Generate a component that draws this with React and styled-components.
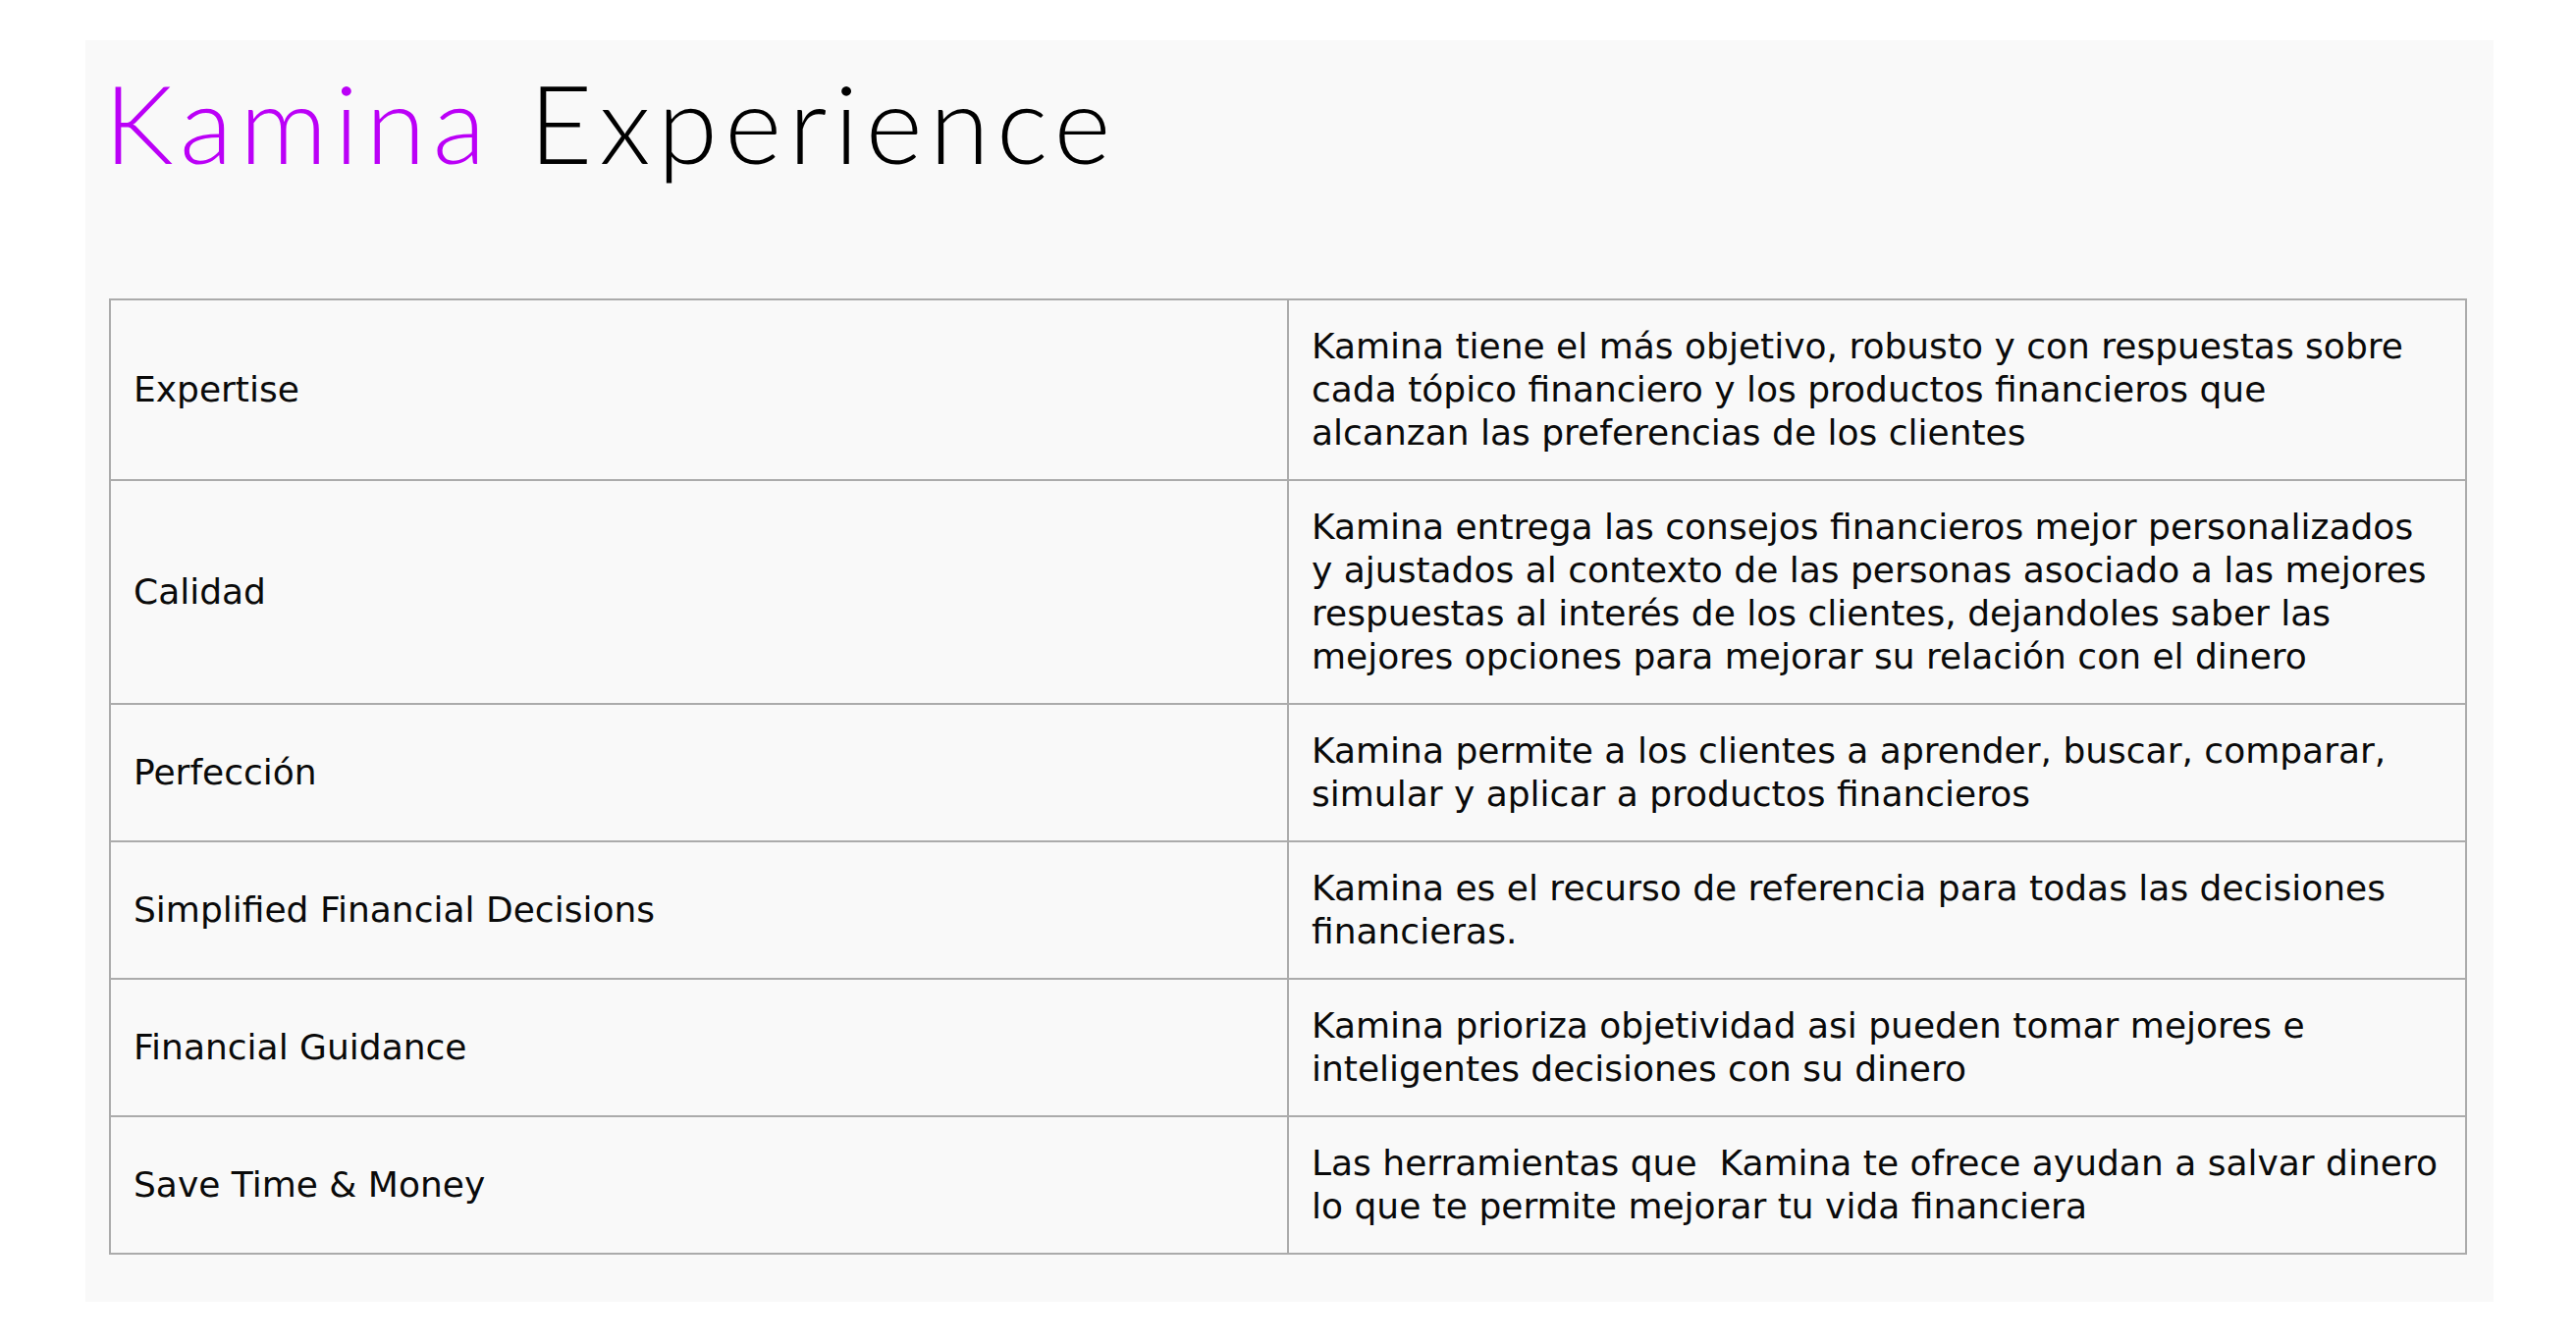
import React from "react";
import styled, { createGlobalStyle } from "styled-components";

const Global = createGlobalStyle`
  html, body { margin: 0; padding: 0; background: #ffffff; }
  body { font-family: "DejaVu Sans", "Liberation Sans", sans-serif; }
`;

const Page = styled.div`
  padding: 41px 84px 40px 87px;
`;

const Panel = styled.section`
  width: 2453px;
  background: #f9f9f9;
  padding: 0 25px 48px 24px;
  box-sizing: border-box;
`;

const Title = styled.h1`
  margin: 0 0 0 -5px;
  padding: 18px 0 0 0;
  height: 263px;
  box-sizing: border-box;
  font-family: "Lato", sans-serif;
  font-weight: 300;
  font-size: 111px;
  line-height: 130px;
  color: #000;
  letter-spacing: 7.2px;
`;

const Accent = styled.span`
  color: #bb00f7;
`;

const Table = styled.table`
  width: 2402px;
  border-collapse: collapse;
  table-layout: fixed;
  border: 2px solid #ababab;
`;

const Cell = styled.td`
  border: 2px solid #ababab;
  padding: 25px 25px 25px 23px;
  vertical-align: middle;
  font-family: "DejaVu Sans", sans-serif;
  font-size: 36px;
  line-height: 44px;
  color: #0a0a0a;
  white-space: nowrap;
  width: 50%;
`;

const Line = styled.span`
  display: block;
`;

const rows = [
  {
    label: "Expertise",
    lines: [
      "Kamina tiene el más objetivo, robusto y con respuestas sobre",
      "cada tópico financiero y los productos financieros que",
      "alcanzan las preferencias de los clientes",
    ],
  },
  {
    label: "Calidad",
    lines: [
      "Kamina entrega las consejos financieros mejor personalizados",
      "y ajustados al contexto de las personas asociado a las mejores",
      "respuestas al interés de los clientes, dejandoles saber las",
      "mejores opciones para mejorar su relación con el dinero",
    ],
  },
  {
    label: "Perfección",
    lines: [
      "Kamina permite a los clientes a aprender, buscar, comparar,",
      "simular y aplicar a productos financieros",
    ],
  },
  {
    label: "Simplified Financial Decisions",
    lines: [
      "Kamina es el recurso de referencia para todas las decisiones",
      "financieras.",
    ],
  },
  {
    label: "Financial Guidance",
    lines: [
      "Kamina prioriza objetividad asi pueden tomar mejores e",
      "inteligentes decisiones con su dinero",
    ],
  },
  {
    label: "Save Time & Money",
    lines: [
      "Las herramientas que\u00a0 Kamina te ofrece ayudan a salvar dinero",
      "lo que te permite mejorar tu vida financiera",
    ],
  },
];

export default function App() {
  return (
    <>
      <Global />
      <Page>
        <Panel>
          <Title>
            <Accent>Kamina</Accent> Experience
          </Title>
          <Table>
            <tbody>
              {rows.map((r) => (
                <tr key={r.label}>
                  <Cell>{r.label}</Cell>
                  <Cell>
                    {r.lines.map((l, i) => (
                      <Line key={i}>{l}</Line>
                    ))}
                  </Cell>
                </tr>
              ))}
            </tbody>
          </Table>
        </Panel>
      </Page>
    </>
  );
}
